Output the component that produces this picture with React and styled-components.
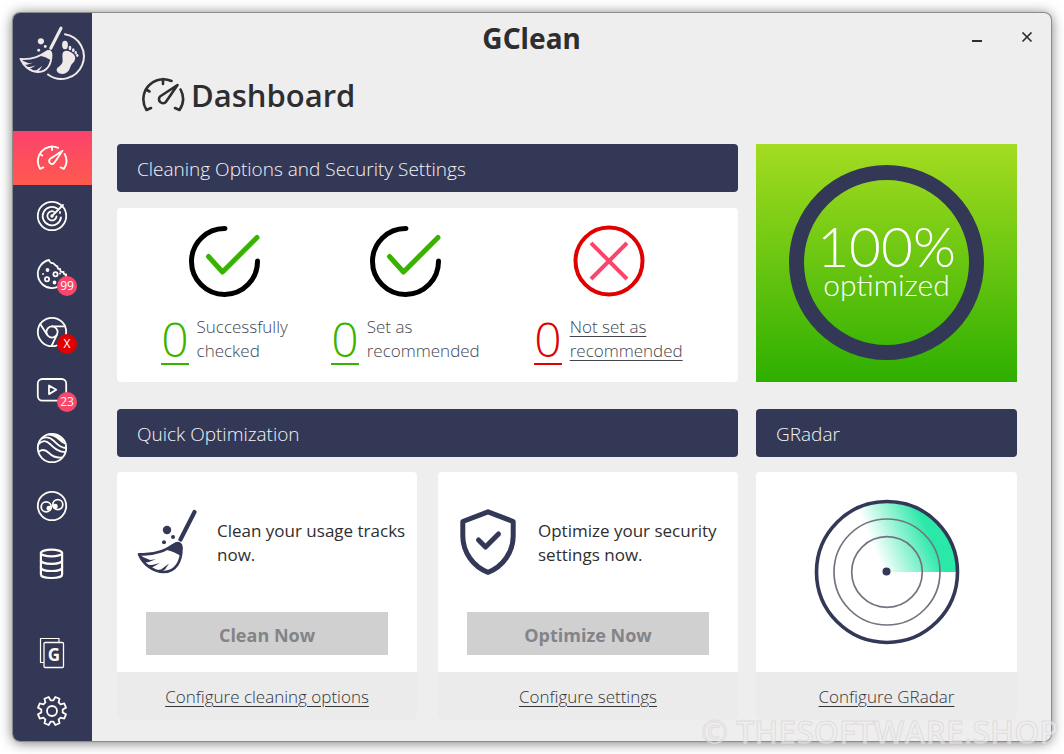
import React from 'react';
import styled, { createGlobalStyle, css } from 'styled-components';

const navy = '#343857';
const ink = '#2e2e30';

const NAV = [
  { id: 'dashboard', label: 'Dashboard', Icon: GaugeIcon, active: true },
  { id: 'radar', label: 'GRadar', Icon: TargetIcon },
  { id: 'cookies', label: 'Cookies', Icon: CookieIcon, badge: '99' },
  { id: 'chrome', label: 'Chrome', Icon: ChromeIcon, badge: 'X', alert: true },
  { id: 'youtube', label: 'YouTube', Icon: VideoIcon, badge: '23' },
  { id: 'earth', label: 'Earth', Icon: WavesIcon },
  { id: 'watch', label: 'Watch', Icon: EyesIcon },
  { id: 'storage', label: 'Storage', Icon: DatabaseIcon },
];

const NAV_BOTTOM = [
  { id: 'products', label: 'Products', Icon: ProductsIcon },
  { id: 'settings', label: 'Settings', Icon: GearIcon },
];

export default function App() {
  return (
    <>
      <GlobalStyle />
      <Desktop>
        <Window>
          <Sidebar>
            <LogoIcon />
            <NavList>
              {NAV.map((item) => (
                <NavItem key={item.id} {...item} />
              ))}
            </NavList>
            <NavList>
              {NAV_BOTTOM.map((item) => (
                <NavItem key={item.id} {...item} />
              ))}
            </NavList>
          </Sidebar>

          <Main>
            <TitleBar>
              <AppName>GClean</AppName>
              <WindowButtons>
                <WindowButton aria-label="Minimize">
                  <svg width="12" height="12" viewBox="0 0 12 12">
                    <path d="M1 9h10" stroke={ink} strokeWidth="2" />
                  </svg>
                </WindowButton>
                <WindowButton aria-label="Close">
                  <svg width="12" height="12" viewBox="0 0 12 12">
                    <path d="M1.500 .500l9 9M10.500 .500l-9 9" stroke={ink} strokeWidth="1.700" />
                  </svg>
                </WindowButton>
              </WindowButtons>
            </TitleBar>

            <PageTitle>
              <GaugeIcon width={44} height={36} stroke={2.6} />
              Dashboard
            </PageTitle>

            <Content>
              <Column $gap={16}>
                <SectionBar>Cleaning Options and Security Settings</SectionBar>
                <StatusCard>
                  <Status value="0" color="#38b400" lines={['Successfully', 'checked']}>
                    <CheckIcon />
                  </Status>
                  <Status value="0" color="#38b400" lines={['Set as', 'recommended']}>
                    <CheckIcon />
                  </Status>
                  <Status value="0" color="#e10000" lines={['Not set as', 'recommended']} link>
                    <CrossIcon />
                  </Status>
                </StatusCard>
              </Column>

              <ScoreTile>
                <ScoreRing>
                  <ScoreValue>100%</ScoreValue>
                  <ScoreLabel>optimized</ScoreLabel>
                </ScoreRing>
              </ScoreTile>

              <Column $gap={15}>
                <SectionBar>Quick Optimization</SectionBar>
                <ActionGrid>
                  <Card>
                    <ActionBody>
                      <ActionInfo>
                        <BroomIcon />
                        <ActionText>Clean your usage tracks now.</ActionText>
                      </ActionInfo>
                      <ActionButton disabled>Clean Now</ActionButton>
                    </ActionBody>
                    <CardFooter>
                      <a href="#cleaning">Configure cleaning options</a>
                    </CardFooter>
                  </Card>
                  <Card>
                    <ActionBody>
                      <ActionInfo>
                        <ShieldIcon />
                        <ActionText>Optimize your security settings now.</ActionText>
                      </ActionInfo>
                      <ActionButton disabled>Optimize Now</ActionButton>
                    </ActionBody>
                    <CardFooter>
                      <a href="#settings">Configure settings</a>
                    </CardFooter>
                  </Card>
                </ActionGrid>
              </Column>

              <Column $gap={15}>
                <SectionBar>GRadar</SectionBar>
                <Card>
                  <RadarBody>
                    <RadarIcon />
                  </RadarBody>
                  <CardFooter>
                    <a href="#gradar">Configure GRadar</a>
                  </CardFooter>
                </Card>
              </Column>
            </Content>
          </Main>
        </Window>
        <Watermark>© THESOFTWARE.SHOP</Watermark>
      </Desktop>
    </>
  );
}

function NavItem({ label, Icon, active, badge, alert }) {
  return (
    <NavButton $active={active} aria-label={label}>
      <Icon />
      {badge && <Badge $alert={alert}>{badge}</Badge>}
    </NavButton>
  );
}

function Status({ value, color, lines, link, children }) {
  const text = (
    <>
      {lines[0]}
      <br />
      {lines[1]}
    </>
  );
  return (
    <StatusCell>
      {children}
      <StatusRow>
        <StatusValue $color={color}>{value}</StatusValue>
        {link ? (
          <StatusLabel as="a" href="#not-set">
            {text}
          </StatusLabel>
        ) : (
          <StatusLabel>{text}</StatusLabel>
        )}
      </StatusRow>
    </StatusCell>
  );
}

/* ---------- icons ---------- */

function NavSvg({ children }) {
  return (
    <svg
      width="32"
      height="32"
      viewBox="0 0 32 32"
      fill="none"
      stroke="currentColor"
      strokeWidth="1.8"
      strokeLinecap="round"
      strokeLinejoin="round"
    >
      {children}
    </svg>
  );
}

function GaugeIcon({ width = 32, height = 26, stroke = 2.6 }) {
  return (
    <svg
      width={width}
      height={height}
      viewBox="0 0 44 36"
      fill="none"
      stroke="currentColor"
      strokeWidth={stroke}
      strokeLinecap="round"
      strokeLinejoin="round"
    >
      <path d="M10 31l-4.500 2A20 20 0 0 1 30.500 4" />
      <path d="M39.600 12.500A20 20 0 0 1 38.500 33L34 31" />
      <path d="M22 2v5M5 12.500l3.500 2" />
      <path d="M36.500 8L19 19.500A4 4 0 1 0 25 24.800z" />
    </svg>
  );
}

function TargetIcon() {
  return (
    <NavSvg>
      <circle cx="16" cy="16" r="14.2" />
      <path d="M21.500 8.800A9.200 9.200 0 1 0 25 17.500" />
      <path d="M18 11.700A4.600 4.600 0 1 0 20.500 16.500" />
      <path d="M16 16L27 5M24 12v1" />
      <circle cx="16" cy="16" r="0.8" />
    </NavSvg>
  );
}

function CookieIcon() {
  return (
    <NavSvg>
      <path d="M13 2A14.200 14.200 0 1 0 30.200 16.500c-1.800.300-2.800-.8-2.600-2.500-2.300.4-3.700-.8-3.400-3-2 .3-2.900-.8-2.700-2.500-2-.3-2.300-1.600-4.300-3.400-1.500.5-3.500-1-4.200-3.100z" />
      <circle cx="11" cy="21.300" r="2.100" />
      <circle cx="19.500" cy="16.300" r="2.100" />
      <circle cx="11.500" cy="12" r="1" fill="currentColor" />
      <circle cx="18.500" cy="24.500" r="1" fill="currentColor" />
      <path d="M7 16h.1M24 15.500h.1" />
    </NavSvg>
  );
}

function ChromeIcon() {
  return (
    <NavSvg>
      <circle cx="16" cy="16" r="14.200" />
      <circle cx="16" cy="16" r="5.600" />
      <path d="M16 10.400h13M11.100 18.800L4.200 8M20.900 18.800L15.500 30" />
    </NavSvg>
  );
}

function VideoIcon() {
  return (
    <NavSvg>
      <rect x="1.800" y="5" width="28.400" height="21.600" rx="4.500" />
      <path d="M13 11.500v8.600l7.300-4.300z" />
    </NavSvg>
  );
}

function WavesIcon() {
  return (
    <NavSvg>
      <circle cx="16" cy="16" r="14.200" />
      <path d="M2.500 12c4-4 8-3.500 11.500 0s7.500 8 14.800 8" />
      <path d="M6 6.500c5-2.500 8.500-1 12 2.500s6.500 7 12 7" />
      <path d="M3 19.500c4-3 7-1.500 10 1.500s7 5 12.500 4.500" />
      <path d="M13 2.500c5 .5 8 2.500 10.500 5s4 3.500 6 4M20 3c2.500 1.500 4.500 3 7 5.500" />
    </NavSvg>
  );
}

function EyesIcon() {
  return (
    <NavSvg>
      <circle cx="16" cy="16" r="14.200" />
      <circle cx="10.200" cy="16.800" r="5" />
      <circle cx="21.800" cy="14.600" r="5" />
      <circle cx="13" cy="18.300" r="1.600" fill="currentColor" />
      <circle cx="19.200" cy="16.200" r="1.600" fill="currentColor" />
    </NavSvg>
  );
}

function DatabaseIcon() {
  return (
    <NavSvg>
      <g strokeWidth="2.200">
        <ellipse cx="15.500" cy="5" rx="10.600" ry="3.400" />
        <path d="M4.900 5v21.500c0 2 4.500 3.500 10.600 3.500s10.600-1.500 10.600-3.500V5" />
        <path d="M4.900 12.300c0 2 4.500 3.600 10.600 3.600s10.600-1.600 10.600-3.600M4.900 19.400c0 2 4.500 3.600 10.600 3.600s10.600-1.600 10.600-3.600" />
      </g>
    </NavSvg>
  );
}

function ProductsIcon() {
  return (
    <NavSvg>
      <path d="M7.500 25.500h-3V1.500h18.500v3" strokeWidth="1.200" />
      <rect x="8" y="5.500" width="19.500" height="25" rx="1.200" strokeWidth="1.300" />
      <text
        x="17.800"
        y="24.300"
        textAnchor="middle"
        fontFamily="'Open Sans', sans-serif"
        fontSize="17"
        fontWeight="700"
        fill="currentColor"
        stroke="none"
      >
        G
      </text>
    </NavSvg>
  );
}

const TEETH = Array.from({ length: 8 }, (_, i) => {
  const base = 22.5 + i * 45;
  return [[-15, 10.8], [-9, 14.4], [9, 14.4], [15, 10.8]].map(([da, r]) => {
    const a = ((base + da) * Math.PI) / 180;
    return `${16 + r * Math.cos(a)},${16 + r * Math.sin(a)}`;
  });
}).flat();

function GearIcon() {
  return (
    <NavSvg>
      <polygon points={TEETH.join(' ')} />
      <circle cx="16" cy="16" r="5" />
    </NavSvg>
  );
}

function BroomShape() {
  return (
    <>
      <path d="M57.500 3L43.500 30.500" stroke="currentColor" strokeWidth="4.200" fill="none" strokeLinecap="round" />
      <circle cx="30" cy="21" r="4.200" />
      <circle cx="36" cy="28" r="2" />
      <circle cx="27" cy="33.300" r="2" />
      <path
        d="M2 45.200C20 46.500 30 40 37 35.500c4-3 7.500-1 7.500 4C44.500 52 39 63 26.500 63 16 63 6 55 2 45.200z"
        fill="none"
        stroke="currentColor"
        strokeWidth="2.600"
        strokeLinejoin="round"
      />
      <path d="M29.500 41c4 .5 9 2.500 14.500 6l1.300-8c0-5-4-7.500-8-4.500z" />
      <path d="M3 46l3 2 7 3 6-.8-8 3h-3l2 2.500 5 .300 8-2-8 4.500 5 2.500 4-.5 8-6-4 6-4 2.500-7-1L9 57z" />
    </>
  );
}

function BroomIcon() {
  return (
    <svg width="60" height="66" viewBox="0 0 60 66" fill={navy} color={navy}>
      <BroomShape />
    </svg>
  );
}

function LogoIcon() {
  return (
    <Logo width="68" height="56" viewBox="0 0 68 56" fill="currentColor">
      <g transform="scale(0.73)">
        <BroomShape />
      </g>
      <path
        d="M46 8.200A22.500 22.500 0 1 1 29 48.500"
        fill="none"
        stroke="currentColor"
        strokeWidth="2"
        strokeLinecap="round"
      />
      <ellipse cx="46" cy="19" rx="2.900" ry="4.200" />
      <ellipse cx="51" cy="22" rx="1.400" ry="2.200" />
      <ellipse cx="54.300" cy="24.200" rx="1.300" ry="2" />
      <ellipse cx="56.800" cy="26.700" rx="1.200" ry="1.700" />
      <ellipse cx="58.300" cy="29.500" rx="1.200" ry="1.400" />
      <path d="M43.500 28c.5-3 4-4 7-2.500 4 1.800 6.500 4.500 5.500 8-.6 3-3.500 4-4.500 7-1 3.500-3.500 7.500-8 7.500-4 0-7-3-5.500-5.500 1.500-2 4.500-3 5.500-6.500.6-2.500-.5-5 0-8z" />
    </Logo>
  );
}

function CheckIcon() {
  return (
    <svg width="72" height="72" viewBox="0 0 72 72" fill="none" strokeWidth="5" strokeLinecap="round">
      <path d="M36 3.500A33 33 0 1 0 68.500 36" stroke="#000" />
      <path d="M19.500 31.500L33.500 47 68 12.500" stroke="#38b400" strokeLinejoin="round" />
    </svg>
  );
}

function CrossIcon() {
  return (
    <svg width="72" height="72" viewBox="0 0 72 72" fill="none" strokeWidth="4">
      <circle cx="36" cy="36" r="33.500" stroke="#e10000" />
      <path d="M18 18l36 36M54 18L18 54" stroke="#fb466c" />
    </svg>
  );
}

function ShieldIcon() {
  return (
    <svg
      width="60"
      height="66"
      viewBox="0 0 60 66"
      fill="none"
      stroke={navy}
      strokeWidth="5"
      strokeLinecap="round"
      strokeLinejoin="round"
    >
      <path d="M30 2.800L55.200 12.500V27C55.200 43 45 57.500 30 63.300 15 57.500 4.800 43 4.800 27V12.500z" />
      <path d="M20.500 31l7 7L40.500 25" />
    </svg>
  );
}

function RadarIcon() {
  return (
    <svg width="146" height="146" viewBox="0 0 146 146" fill="none">
      <defs>
        <linearGradient id="sweep" gradientUnits="userSpaceOnUse" x1="56" y1="40" x2="108" y2="18">
          <stop offset="0" stopColor="#2ae8a8" stopOpacity="0" />
          <stop offset="1" stopColor="#2ae8a8" />
        </linearGradient>
      </defs>
      <path d="M73 73L40 12A70 70 0 0 1 143 73z" fill="url(#sweep)" />
      <circle cx="73" cy="73" r="70.500" stroke={navy} strokeWidth="3.600" />
      <circle cx="73" cy="73" r="53" stroke="#72747f" strokeWidth="1.700" />
      <circle cx="73" cy="73" r="35.300" stroke="#72747f" strokeWidth="1.700" />
      <circle cx="72.500" cy="72.500" r="4" fill={navy} />
    </svg>
  );
}

/* ---------- styles ---------- */

const GlobalStyle = createGlobalStyle`
  *, *::before, *::after {
    box-sizing: border-box;
  }

  body {
    margin: 0;
    background: #fff;
    color: ${ink};
    font-family: 'Open Sans', 'Noto Sans', sans-serif;
  }

  button {
    padding: 0;
    border: 0;
    background: none;
    font: inherit;
    color: inherit;
  }

  svg {
    display: block;
    flex-shrink: 0;
  }
`;

const Desktop = styled.div`
  position: relative;
  display: flex;
  min-height: 100vh;
  padding: 13px;
  overflow: hidden;
`;

const Window = styled.div`
  flex: 1;
  display: flex;
  border-radius: 7px;
  overflow: hidden;
  background: #eee;
  box-shadow: 0 0 0 1px #8c8c8c, 0 1px 13px rgba(0, 0, 0, 0.6);
`;

const Sidebar = styled.nav`
  display: flex;
  flex-direction: column;
  width: 79px;
  padding-bottom: 3px;
  background: ${navy};
  color: #fffdf5;
`;

const Logo = styled.svg`
  align-self: center;
  margin: 13px 0 49px;
  color: #f0e9e9;
`;

const NavList = styled.div`
  display: flex;
  flex-direction: column;
  gap: 4px;

  &:last-child {
    margin-top: auto;
  }
`;

const NavButton = styled.button`
  position: relative;
  display: flex;
  align-items: center;
  justify-content: center;
  height: 54px;
  padding-right: 1px;

  ${({ $active }) =>
    $active &&
    css`
      background: linear-gradient(#fb426d, #ff5a4e);
    `}
`;

const Badge = styled.span`
  position: absolute;
  left: 44px;
  top: 29px;
  width: 20px;
  height: 20px;
  border-radius: 50%;
  background: ${({ $alert }) => ($alert ? '#e00000' : '#fb466c')};
  color: #fff;
  font-size: 12px;
  line-height: 20px;
  text-align: center;
`;

const Main = styled.main`
  flex: 1;
  min-width: 0;
`;

const TitleBar = styled.header`
  display: flex;
  align-items: center;
  height: 50px;
`;

const AppName = styled.div`
  flex: 1;
  font-family: 'Noto Sans', sans-serif;
  font-size: 28px;
  font-weight: 700;
  text-align: center;
`;

const WindowButtons = styled.div`
  display: flex;
  gap: 38px;
  padding-right: 18px;
`;

const WindowButton = styled.button`
  width: 12px;
  height: 12px;
`;

const PageTitle = styled.h1`
  display: flex;
  align-items: center;
  gap: 6px;
  height: 64px;
  margin: 0 0 17px;
  padding-left: 49px;
  font-size: 31px;
  font-weight: 600;
`;

const Content = styled.div`
  display: grid;
  grid-template-columns: minmax(0, 621fr) minmax(0, 261fr);
  gap: 27px 18px;
  padding: 0 34px 21px 25px;
`;

const Column = styled.section`
  display: flex;
  flex-direction: column;
  gap: ${({ $gap }) => $gap}px;
`;

const SectionBar = styled.h2`
  margin: 0;
  padding: 2px 20px 0;
  border-radius: 4px;
  background: ${navy};
  color: #f4f4f4;
  font-size: 19px;
  font-weight: 300;
  line-height: 46px;
`;

const StatusCard = styled.div`
  display: grid;
  grid-template-columns: 215fr 147fr 259fr;
  padding: 17px 0;
  border-radius: 4px;
  background: #fff;
`;

const StatusCell = styled.div`
  display: flex;
  flex-direction: column;
  align-items: center;
  gap: 18px;
  min-width: 0;
`;

const StatusRow = styled.div`
  display: flex;
  align-items: flex-start;
  gap: 8px;
`;

const StatusValue = styled.span`
  border-bottom: 2px solid;
  color: ${({ $color }) => $color};
  font-size: 48px;
  font-weight: 300;
  line-height: 48px;
`;

const StatusLabel = styled.span`
  color: #44464f;
  font-size: 17px;
  font-weight: 300;
  line-height: 24px;
  white-space: nowrap;
  text-underline-offset: 3px;
`;

const ScoreTile = styled.div`
  display: flex;
  align-items: center;
  justify-content: center;
  padding-bottom: 2px;
  background: linear-gradient(#a4dc21, #2eaf00);
`;

const ScoreRing = styled.div`
  display: flex;
  flex-direction: column;
  align-items: center;
  justify-content: center;
  width: 195px;
  height: 195px;
  border: 15px solid ${navy};
  border-radius: 50%;
  color: #fff;
  font-family: Lato, sans-serif;
  font-weight: 300;
`;

const ScoreValue = styled.div`
  font-size: 55px;
  line-height: 44px;
`;

const ScoreLabel = styled.div`
  font-size: 30px;
  line-height: 32px;
`;

const ActionGrid = styled.div`
  display: grid;
  grid-template-columns: 1fr 1fr;
  gap: 21px;
`;

const Card = styled.div`
  border-radius: 4px;
  overflow: hidden;
  background: #fff;
`;

const ActionBody = styled.div`
  display: flex;
  flex-direction: column;
  gap: 37px;
  height: 200px;
  padding: 37px 0 17px;
`;

const ActionInfo = styled.div`
  display: flex;
  align-items: center;
  gap: 20px;
  padding: 0 8px 0 20px;
`;

const ActionText = styled.p`
  margin: 0;
  padding-top: 2px;
  font-size: 17px;
  line-height: 24px;
`;

const ActionButton = styled.button`
  height: 43px;
  margin: 0 29px;
  padding-top: 2px;
  background: #d0d0d0;
  color: #838488;
  font-size: 18px;
  font-weight: 700;
`;

const RadarBody = styled.div`
  display: flex;
  align-items: center;
  justify-content: center;
  height: 200px;
`;

const CardFooter = styled.div`
  padding-top: 2px;
  background: #ebebeb;
  font-size: 17px;
  font-weight: 300;
  line-height: 46px;
  text-align: center;

  a {
    color: #33353c;
    text-underline-offset: 3px;
  }
`;

const Watermark = styled.div`
  position: absolute;
  right: 5px;
  bottom: 2px;
  color: rgba(238, 238, 238, 0.6);
  -webkit-text-stroke: 1px rgba(205, 190, 196, 0.4);
  font-size: 32px;
  font-weight: 600;
  line-height: 40px;
  white-space: nowrap;
`;
